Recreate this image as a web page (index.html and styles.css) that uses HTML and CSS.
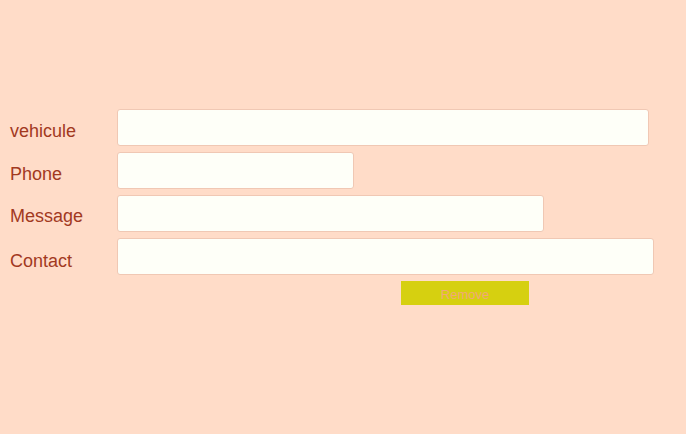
FILE: index.html
```html
<!DOCTYPE html>
<html>
<head>
<meta charset="utf-8">
<link rel="stylesheet" href="styles.css">
</head>
<body>
<form class="form">
  <div class="row"><label class="label">vehicule</label><input class="field field-vehicule" type="text"></div>
  <div class="row"><label class="label">Phone</label><input class="field field-phone" type="text"></div>
  <div class="row"><label class="label label-message">Message</label><input class="field field-message" type="text"></div>
  <div class="row"><label class="label label-contact">Contact</label><input class="field field-contact" type="text"></div>
  <div class="actions"><button class="remove" type="button">Remove</button></div>
</form>
</body>
</html>
```
FILE: styles.css
```css
html, body {
  margin: 0;
  padding: 0;
  background: #ffdcc8;
  height: 100%;
}
body {
  font-family: "Liberation Sans", Arial, sans-serif;
}
.form {
  padding: 109px 0 0 10px;
  display: flex;
  flex-direction: column;
  gap: 6px;
}
.row {
  display: flex;
  align-items: flex-start;
  height: 37px;
}
.label {
  box-sizing: border-box;
  width: 107px;
  font-size: 18px;
  line-height: 18px;
  color: #a2391f;
  padding-top: 13px;
}
.label-message {
  padding-top: 12px;
}
.label-contact {
  padding-top: 14px;
}
.field {
  box-sizing: border-box;
  height: 37px;
  margin: 0;
  background: #fefff8;
  border: 1px solid #f0c8b4;
  border-radius: 3px;
  outline: none;
}
.field-vehicule { width: 532px; }
.field-phone { width: 237px; }
.field-message { width: 427px; }
.field-contact { width: 537px; }
.actions {
  padding-left: 391px;
}
.remove {
  width: 128px;
  height: 24px;
  border: none;
  margin: 0;
  background: #d6d010;
  color: #f2a878;
  font-family: "Liberation Sans", Arial, sans-serif;
  font-size: 13px;
  padding: 2px 0 0;
}
```
